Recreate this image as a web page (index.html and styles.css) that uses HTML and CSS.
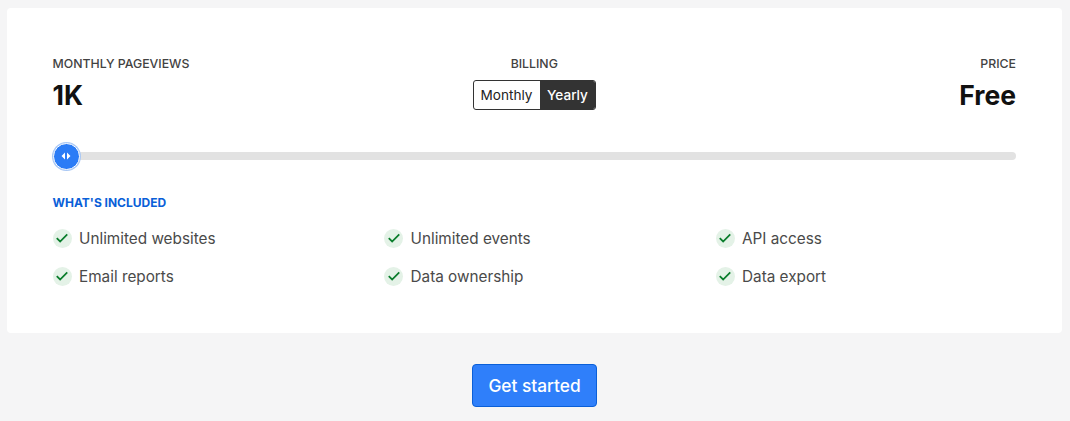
FILE: index.html
```html
<!DOCTYPE html>
<html lang="en">
<head>
    <meta charset="UTF-8">
    <meta name="viewport" content="width=device-width, initial-scale=1.0">
    <title>Pricing</title>
    <link rel="stylesheet" href="styles.css">
</head>
<body>
    <div class="card">
        <div class="top-row">
            <div class="col">
                <div class="label">MONTHLY PAGEVIEWS</div>
                <div class="value">1K</div>
            </div>
            <div class="col col-center">
                <div class="label">BILLING</div>
                <div class="toggle">
                    <span class="toggle-btn toggle-first">Monthly</span>
                    <span class="toggle-btn toggle-active">Yearly</span>
                </div>
            </div>
            <div class="col col-right">
                <div class="label">PRICE</div>
                <div class="value">Free</div>
            </div>
        </div>

        <div class="slider">
            <div class="track"></div>
            <div class="thumb">
                <svg width="12" height="10" viewBox="0 0 12 10"><path d="M5 1.500V8.500L1.500 5Z M7 1.500V8.500L10.500 5Z" fill="#fff"/></svg>
            </div>
        </div>

        <div class="included-title">WHAT'S INCLUDED</div>
        <div class="features">
            <div class="feature"><span class="check"><svg width="14" height="12" viewBox="0 0 12 10"><path d="M1.500 5.200L4.400 8L10.500 1.800" fill="none" stroke="#0a7d2c" stroke-width="1.500"/></svg></span>Unlimited websites</div>
            <div class="feature"><span class="check"><svg width="14" height="12" viewBox="0 0 12 10"><path d="M1.500 5.200L4.400 8L10.500 1.800" fill="none" stroke="#0a7d2c" stroke-width="1.500"/></svg></span>Unlimited events</div>
            <div class="feature"><span class="check"><svg width="14" height="12" viewBox="0 0 12 10"><path d="M1.500 5.200L4.400 8L10.500 1.800" fill="none" stroke="#0a7d2c" stroke-width="1.500"/></svg></span>API access</div>
            <div class="feature"><span class="check"><svg width="14" height="12" viewBox="0 0 12 10"><path d="M1.500 5.200L4.400 8L10.500 1.800" fill="none" stroke="#0a7d2c" stroke-width="1.500"/></svg></span>Email reports</div>
            <div class="feature"><span class="check"><svg width="14" height="12" viewBox="0 0 12 10"><path d="M1.500 5.200L4.400 8L10.500 1.800" fill="none" stroke="#0a7d2c" stroke-width="1.500"/></svg></span>Data ownership</div>
            <div class="feature"><span class="check"><svg width="14" height="12" viewBox="0 0 12 10"><path d="M1.500 5.200L4.400 8L10.500 1.800" fill="none" stroke="#0a7d2c" stroke-width="1.500"/></svg></span>Data export</div>
        </div>
    </div>

    <div class="cta">
        <button class="btn-primary">Get started</button>
    </div>
</body>
</html>
```

FILE: styles.css
```css
* {
    margin: 0;
    padding: 0;
    box-sizing: border-box;
    font-family: Inter, 'Noto Sans', sans-serif;
}

body {
    background-color: #f5f5f6;
    padding: 8px 8px 0 7px;
    overflow: hidden;
}

.card {
    background-color: #fff;
    border-radius: 4px;
    height: 325px;
    padding: 47px 46px 0 45.500px;
}

.top-row {
    display: flex;
    justify-content: space-between;
    height: 80px;
}

.col {
    width: 300px;
}

.col-center {
    display: flex;
    flex-direction: column;
    align-items: center;
}

.col-right {
    text-align: right;
}

.label {
    font-size: 12.300px;
    font-weight: 500;
    line-height: 17px;
    color: #424242;
}

.value {
    font-size: 26.500px;
    font-weight: 700;
    line-height: 32px;
    margin-top: 7px;
    color: #111;
}

.toggle {
    display: flex;
    margin-top: 8px;
    height: 30px;
    border: 1px solid #333;
    border-radius: 3px;
    overflow: hidden;
}

.toggle-btn {
    font-size: 13.600px;
    line-height: 28px;
    padding: 0 7px;
    color: #222;
}

.toggle-first {
    padding-right: 7.500px;
}

.toggle-active {
    background-color: #333;
    color: #fff;
    font-weight: 500;
}

.slider {
    position: relative;
    height: 8px;
    margin-top: 17px;
}

.track {
    height: 8px;
    background-color: #e2e2e2;
    border-radius: 4px;
}

.thumb {
    position: absolute;
    left: 0;
    top: -9.500px;
    width: 27px;
    height: 27px;
    background-color: #2b7cf6;
    border: 1px solid #fff;
    border-radius: 50%;
    box-shadow: 0 0 0 1px #a9c8f5;
    display: flex;
    justify-content: center;
    align-items: center;
}

.included-title {
    font-size: 12px;
    font-weight: 700;
    line-height: 16px;
    color: #0a5fd8;
    margin-top: 35px;
}

.features {
    display: grid;
    grid-template-columns: repeat(3, 331.500px);
    grid-auto-rows: 38px;
    margin-top: 8px;
}

.feature {
    display: flex;
    align-items: center;
    gap: 7.500px;
    font-size: 15.300px;
    color: #4a4a4a;
}

.check {
    width: 19px;
    height: 19px;
    border-radius: 50%;
    background-color: #e4f2e7;
    display: flex;
    justify-content: center;
    align-items: center;
}

.cta {
    display: flex;
    justify-content: center;
    margin-top: 31px;
}

.btn-primary {
    width: 125px;
    height: 43px;
    background-color: #2f7ffa;
    border: 1px solid #0a5fd8;
    border-radius: 4px;
    color: #fff;
    font-size: 17.300px;
    font-weight: 500;
    padding-bottom: 1px;
}
```
